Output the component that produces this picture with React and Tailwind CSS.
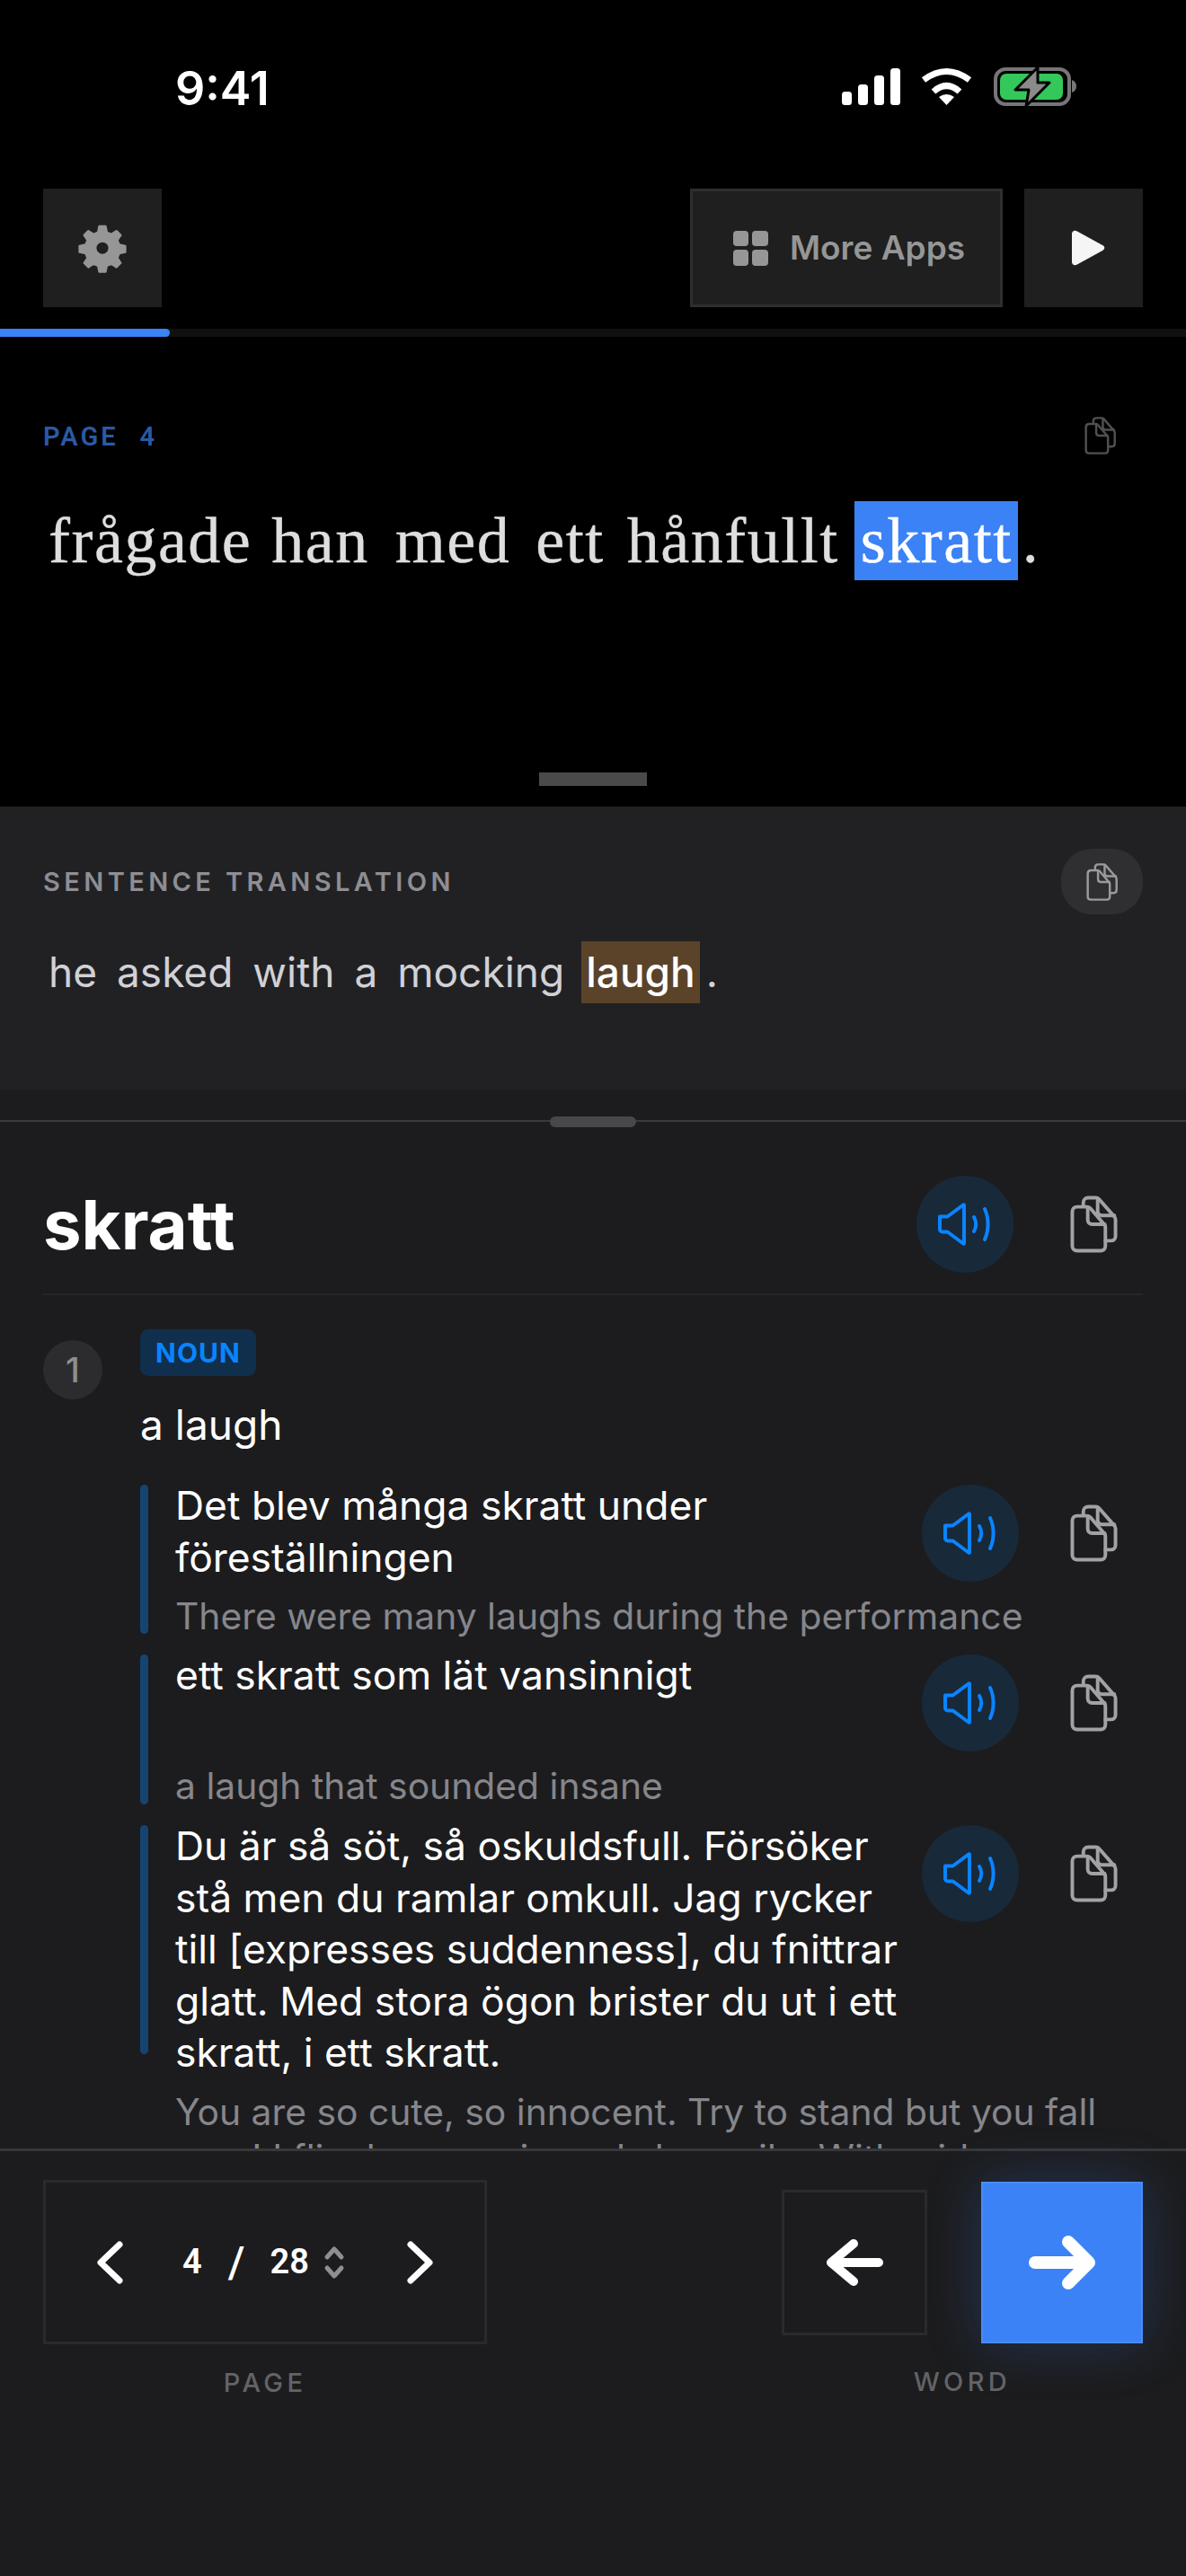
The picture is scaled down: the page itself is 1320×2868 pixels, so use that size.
import React from "react";

const inter = "font-['Inter','Noto_Sans',sans-serif]";

function CopyIcon({ className = "", stroke = "#a1a1a6", sw = 1.6 }) {
  return (
    <svg viewBox="0 0 22 26" className={className} fill="none" stroke={stroke} strokeWidth={sw} strokeLinejoin="round" strokeLinecap="round">
      <path d="M6 4.200V3.200C6 1.900 6.900 1 8.200 1h3.400c.6 0 1.100.2 1.500.6l6.900 7.900c.4.4.6.9.6 1.500v7.400c0 1.300-.9 2.100-2.100 2.100H16" />
      <path d="M12.500 1.300V7c0 1.200.8 2 2 2h5.600" />
      <path d="M1 7.400C1 6 1.900 5.100 3.200 5.100h4.400c.6 0 1.100.2 1.500.6l6.300 7.300c.4.4.6.9.6 1.400v8.500c0 1.300-.9 2.100-2.100 2.100H3.200C1.900 25 1 24.200 1 22.900Z" />
      <path d="M8 5.300V11c0 1.200.8 2 2 2h5.700" />
    </svg>
  );
}

function SpeakerIcon({ className = "" }) {
  return (
    <svg viewBox="0 0 60 60" className={className} fill="none" stroke="#0a84ff" strokeWidth="4" strokeLinecap="round" strokeLinejoin="round">
      <path d="M2 21.500h8.500L28 8.500c.5-.4 1-.1 1 .5v42c0 .6-.5.9-1 .5L10.500 38.500H5c-1.800 0-3-1.200-3-3Z" />
      <path d="M40 22c2.800 5 2.800 11 0 16" />
      <path d="M52 13c4.800 10.500 4.800 23.500 0 34" />
    </svg>
  );
}

function SoundCopy() {
  return (
    <div className="flex items-center gap-[57px]">
      <div className="w-[108px] h-[108px] rounded-full bg-[#18293a] flex items-center justify-center">
        <SpeakerIcon className="w-[60px] h-[60px]" />
      </div>
      <CopyIcon className="w-[54px] h-[66px]" />
    </div>
  );
}

function Example({ lines, tr, barH, h }) {
  return (
    <div className="relative pl-[39px]" style={{ height: h }}>
      <div className="absolute left-0 top-0 w-[9px] rounded-full bg-[#164470]" style={{ height: barH }} />
      <div className="flex justify-between items-start pr-[27px]">
        <div className="w-[820px] -mt-[5px] text-[44.4px] leading-[57.6px] text-white min-h-[115px]">
          {lines.map((l) => (<div key={l} className="whitespace-nowrap">{l}</div>))}
        </div>
        <SoundCopy />
      </div>
      <div className="mt-[11px] text-[40.8px] leading-[51px] text-[#86868b] whitespace-nowrap">{tr}</div>
    </div>
  );
}

export default function App() {
  return (
    <div className={`w-[1320px] h-[2868px] bg-black overflow-hidden flex flex-col ${inter}`}>
      {/* status bar */}
      <div className="h-[210px] shrink-0 flex justify-between items-start pl-[195px] pr-[121px] pt-[69px]">
        <div className="text-[52px] leading-[60px] font-semibold text-white">9:41</div>
        <svg width="262" height="52" viewBox="0 0 262 52" className="mt-[1px]">
          <rect x="0" y="32" width="11" height="15" rx="3.500" fill="#fff" />
          <rect x="18" y="24" width="11" height="23" rx="3.500" fill="#fff" />
          <rect x="36" y="14" width="11" height="33" rx="3.500" fill="#fff" />
          <rect x="54" y="6" width="11" height="41" rx="3.500" fill="#fff" />
          <path d="M91 19Q116.500 0 142 19" stroke="#fff" strokeWidth="7" fill="none" />
          <path d="M102 32Q116.500 19 131 32" stroke="#fff" strokeWidth="7" fill="none" />
          <path d="M108 38Q116.500 32 125 38L116.500 47Z" fill="#fff" />
          <rect x="171" y="7" width="82" height="39" rx="11" fill="none" stroke="#767676" strokeWidth="4" />
          <rect x="176" y="12" width="70" height="29" rx="7" fill="#34c759" />
          <path d="M256 19c3 .8 5 3.500 5 7s-2 6.200-5 7Z" fill="#767676" />
          <path d="M218 5 193 30h15l-3 18 26-26h-13Z" fill="#8a8a8a" stroke="#000" strokeWidth="3" strokeLinejoin="round" />
        </svg>
      </div>

      {/* toolbar */}
      <div className="h-[132px] shrink-0 px-[48px] flex justify-between">
        <div className="w-[132px] h-[132px] bg-[#1f1f1f] flex items-center justify-center">
          <svg viewBox="0 0 24 24" className="w-[56px] h-[56px]" fill="#969696" stroke="#969696" strokeWidth="1" strokeLinejoin="round" fillRule="evenodd">
            <path d="M10.500 1.700h3l.6 2.900 2.200.9 2.400-1.600 2 2-1.600 2.400.9 2.200 2.900.6v2.900l-2.900.6-.9 2.200 1.600 2.400-2 2-2.400-1.600-2.200.9-.6 2.900h-3l-.6-2.900-2.200-.9-2.400 1.600-2-2 1.600-2.400-.9-2.200-2.900-.6v-2.900l2.900-.6.9-2.200-1.600-2.400 2-2 2.400 1.600 2.200-.9ZM12 8.800a3.300 3.300 0 1 0 0 6.600 3.300 3.300 0 0 0 0-6.600Z" />
          </svg>
        </div>
        <div className="flex gap-[24px]">
          <div className="w-[348px] h-[132px] pl-[6px] bg-[#1f1f1f] border-[3px] border-[#2e2e2e] flex items-center justify-center gap-[24px]">
            <svg viewBox="0 0 39 39" className="w-[39px] h-[39px]" fill="#969696">
              <rect x="0" y="0" width="17" height="17" rx="4" />
              <rect x="21" y="0" width="18" height="17" rx="4" />
              <rect x="0" y="21" width="17" height="18" rx="4" />
              <rect x="21" y="21" width="18" height="18" rx="4" />
            </svg>
            <span className="text-[37px] font-semibold text-[#969696]">More Apps</span>
          </div>
          <div className="w-[132px] h-[132px] bg-[#1f1f1f] flex items-center justify-center">
            <svg viewBox="0 0 38 40" className="w-[37px] h-[40px] ml-[10px]" fill="#f5f5f5">
              <path d="M0 4C0 1 3-1 6 1l29 16c3 1.500 3 4.500 0 6L6 39c-3 2-6 0-6-3Z" />
            </svg>
          </div>
        </div>
      </div>

      {/* progress */}
      <div className="mt-[24px] h-[9px] shrink-0 bg-[#111111]">
        <div className="h-full w-[189px] bg-[#3b82f6] rounded-r-full" />
      </div>

      {/* sentence */}
      <div className="h-[523px] shrink-0 relative px-[48px] pt-[94px]">
        <div className="flex justify-between items-start">
          <div className="text-[29px] leading-[34px] font-semibold text-[#2a5aa6] tracking-[3px] font-['Roboto',sans-serif] whitespace-nowrap">
            <span>PAGE</span>
            <span className="ml-[24px]">4</span>
          </div>
          <CopyIcon className="w-[36px] h-[46px] -mt-[7px] mr-[29px]" stroke="#505050" sw="1.500" />
        </div>
        <div className="mt-[50px] flex items-center font-['Liberation_Serif',serif] text-[72px] leading-[88px] tracking-[1.5px] text-[#dedede] ml-[6px] whitespace-nowrap [-webkit-text-stroke:0.4px]">
          <span>frågade</span>
          <span className="ml-[22px]">han</span>
          <span className="ml-[29px]">med</span>
          <span className="ml-[28px]">ett</span>
          <span className="ml-[25px]">hånfullt</span>
          <span className="ml-[17px] pl-[7px] pr-[6px] bg-[#3b82f6] text-white">skratt</span>
          <span className="ml-[5px]">.</span>
        </div>
        <div className="absolute left-[600px] top-[485px] w-[120px] h-[15px] bg-[#4a4a4a]" />
      </div>

      {/* translation */}
      <div className="h-[315px] shrink-0 bg-[#212124] px-[48px] pt-[47px]">
        <div className="flex justify-between items-center h-[73px]">
          <div className="text-[29px] font-semibold text-[#8e8e93] tracking-[4.4px]">SENTENCE TRANSLATION</div>
          <div className="w-[91px] h-[73px] rounded-[34px] bg-[#2f2f31] flex items-center justify-center">
            <CopyIcon className="w-[36px] h-[46px]" stroke="#9a9a9e" sw="1.500" />
          </div>
        </div>
        <div className="mt-[30px] flex items-center text-[46px] leading-[69px] text-[#d1d1d6] ml-[6px] whitespace-nowrap">
          <span>he</span>
          <span className="ml-[22px]">asked</span>
          <span className="ml-[22px]">with</span>
          <span className="ml-[22px]">a</span>
          <span className="ml-[22px]">mocking</span>
          <span className="ml-[19px] px-[5px] bg-[#5a4329] text-white font-medium">laugh</span>
          <span className="ml-[7px]">.</span>
        </div>
      </div>

      {/* dictionary */}
      <div className="flex-1 min-h-0 bg-[#1c1c1e] flex flex-col relative">
        <div className="h-[36px] shrink-0 border-b-[2px] border-[#3a3a3c] relative">
          <div className="absolute left-[612px] top-[30px] w-[96px] h-[12px] rounded-full bg-[#48484a]" />
        </div>
        <div className="h-[1143px] shrink-0 overflow-hidden px-[48px]">
          <div className="h-[193px] flex justify-between items-center border-b-[2px] border-[#262628] pt-[36px]">
            <div className="text-[76px] font-bold text-white">skratt</div>
            <div className="flex items-center gap-[63px] pr-[27px]">
              <div className="w-[108px] h-[108px] rounded-full bg-[#18293a] flex items-center justify-center">
                <SpeakerIcon className="w-[60px] h-[60px]" />
              </div>
              <CopyIcon className="w-[54px] h-[66px]" />
            </div>
          </div>
          <div className="flex gap-[42px] pt-[38px]">
            <div className="w-[66px] h-[66px] mt-[12px] rounded-full bg-[#2c2c2e] shrink-0 flex items-center justify-center text-[38px] font-medium text-[#8e8e93]">1</div>
            <div className="flex-1 min-w-0">
              <div className="w-[129px] h-[52px] rounded-[9px] bg-[#0f2f4d] flex items-center justify-center text-[30px] font-bold tracking-[1px] text-[#0a84ff]">NOUN</div>
              <div className="mt-[23px] text-[46px] leading-[62px] text-white">a laugh</div>
              <div className="mt-[36px] flex flex-col gap-[23px]">
                <Example
                  barH={166}
                  h={166}
                  lines={["Det blev många skratt under", "föreställningen"]}
                  tr="There were many laughs during the performance"
                />
                <Example
                  barH={167}
                  h={167}
                  lines={["ett skratt som lät vansinnigt"]}
                  tr="a laugh that sounded insane"
                />
                <Example
                  barH={255}
                  h={440}
                  lines={["Du är så söt, så oskuldsfull. Försöker", "stå men du ramlar omkull. Jag rycker", "till [expresses suddenness], du fnittrar", "glatt. Med stora ögon brister du ut i ett", "skratt, i ett skratt."]}
                  tr={<><div>You are so cute, so innocent. Try to stand but you fall</div><div>over! I flinch, you grin and shy smile. With wide</div></>}
                />
              </div>
            </div>
          </div>
        </div>

        {/* bottom controls */}
        <div className="flex-1 bg-[#1c1c1e] border-t-[3px] border-[#38383a] relative px-[48px] pt-[32px] flex justify-between items-start">
          <div className="flex flex-col items-center">
            <div className="w-[494px] h-[183px] border-[3px] border-[#2a2a2c] flex items-center justify-between px-[56px] text-white">
              <svg viewBox="0 0 30 48" className="w-[30px] h-[48px]" fill="none" stroke="#fff" strokeWidth="7" strokeLinecap="round" strokeLinejoin="round"><path d="M26 4 5 24l21 20" /></svg>
              <div className="flex items-center text-[38px] font-semibold font-['Roboto',sans-serif] whitespace-nowrap -ml-[3px]">
                <span>4</span>
                <span className="ml-[29px] text-[48px] leading-[48px] font-medium">/</span>
                <span className="ml-[28px]">28</span>
                <svg viewBox="0 0 24 40" className="w-[24px] h-[40px] ml-[16px]" fill="none" stroke="#8e8e93" strokeWidth="5" strokeLinecap="round" strokeLinejoin="round"><path d="M4 14 12 5l8 9M4 26l8 9 8-9" /></svg>
              </div>
              <svg viewBox="0 0 30 48" className="w-[30px] h-[48px]" fill="none" stroke="#fff" strokeWidth="7" strokeLinecap="round" strokeLinejoin="round"><path d="M4 4 25 24 4 44" /></svg>
            </div>
            <div className="mt-[27px] text-[29px] leading-[32px] font-medium tracking-[4.4px] text-[#636366]">PAGE</div>
          </div>
          <div className="flex flex-col items-center pt-[2px]">
            <div className="flex items-center gap-[60px]">
              <div className="w-[162px] h-[162px] border-[3px] border-[#2a2a2c] flex items-center justify-center">
                <svg viewBox="0 0 64 52" className="w-[64px] h-[52px]" fill="none" stroke="#fff" strokeWidth="10" strokeLinecap="round" strokeLinejoin="round"><path d="M59 26H6M31 5 6 26l25 21" /></svg>
              </div>
              <div className="w-[180px] h-[180px] bg-[#3b82f6] border-[2px] border-[#4a8bf6] shadow-[0_0_60px_rgba(59,130,246,0.25)] flex items-center justify-center">
                <svg viewBox="0 0 74 60" className="w-[74px] h-[60px]" fill="none" stroke="#fff" strokeWidth="14" strokeLinecap="round" strokeLinejoin="round"><path d="M7 30h59M44 7l23 23-23 23" /></svg>
              </div>
            </div>
            <div className="mt-[27px] text-[29px] leading-[32px] font-medium tracking-[4.4px] text-[#636366]">WORD</div>
          </div>
        </div>
      </div>
    </div>
  );
}
